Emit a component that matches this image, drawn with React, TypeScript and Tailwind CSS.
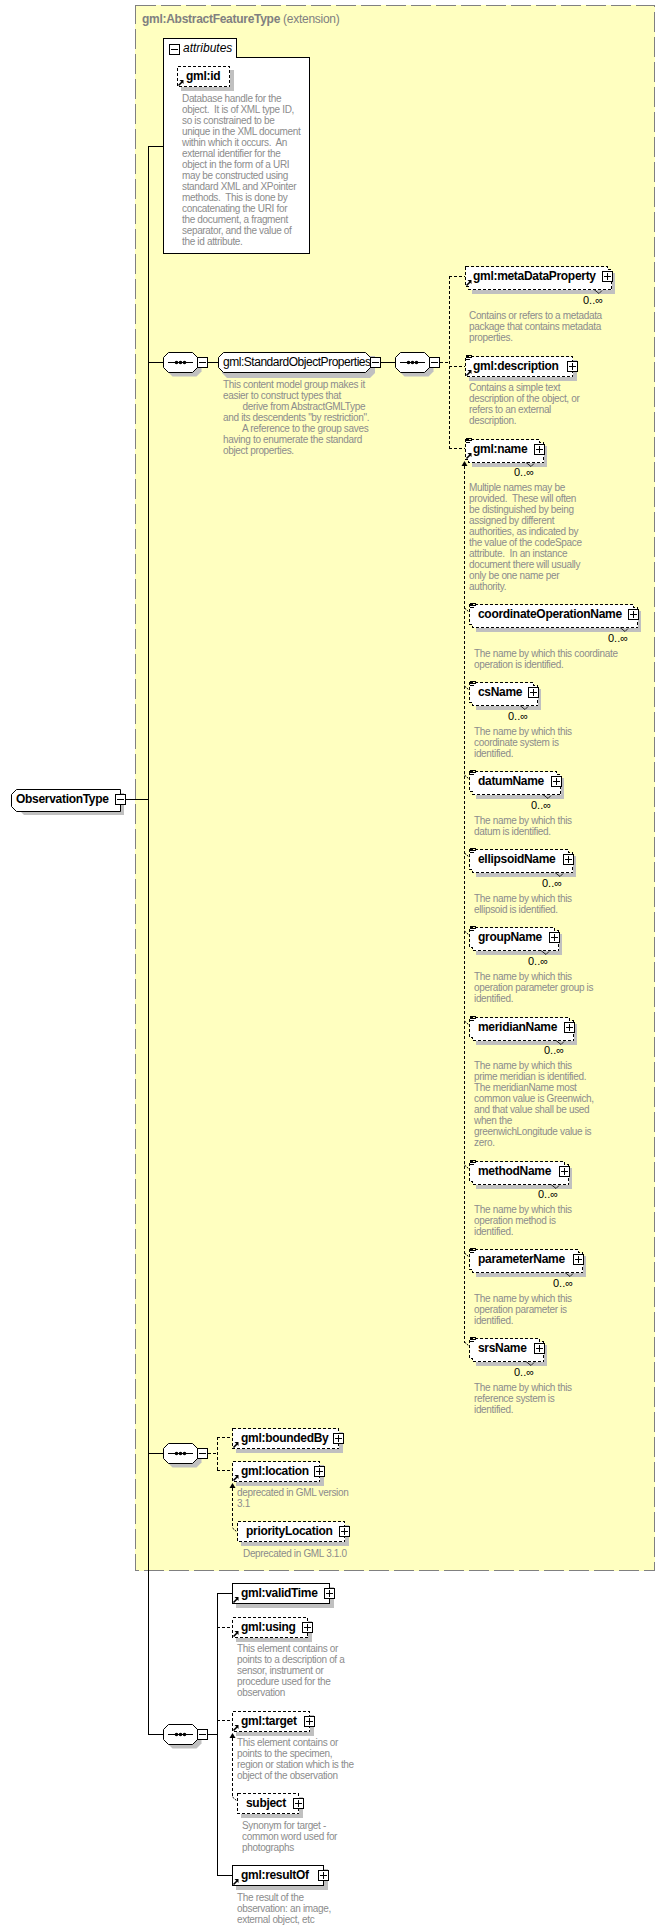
const sans = "font-['Liberation_Sans',Arial,sans-serif]";

type Box = { x: number; y: number; plus: number; multi?: boolean; solid?: boolean; refArrow?: boolean; list?: boolean; noExpander?: boolean };

// element boxes, plus = left edge of the expander square
const boxes: Box[] = [
  { x: 177, y: 66, plus: 224, refArrow: true, noExpander: true },
  { x: 465, y: 266, plus: 602, multi: true, refArrow: true },
  { x: 465, y: 356, plus: 567, refArrow: true, list: true },
  { x: 465, y: 439, plus: 534, multi: true, refArrow: true, list: true },
  { x: 469, y: 604, plus: 628, multi: true, list: true },
  { x: 469, y: 682, plus: 528, multi: true, list: true },
  { x: 469, y: 771, plus: 551, multi: true, list: true },
  { x: 469, y: 849, plus: 563, multi: true, list: true },
  { x: 469, y: 927, plus: 549, multi: true, list: true },
  { x: 469, y: 1017, plus: 564, multi: true, list: true },
  { x: 469, y: 1161, plus: 559, multi: true, list: true },
  { x: 469, y: 1249, plus: 573, multi: true, list: true },
  { x: 469, y: 1338, plus: 534, multi: true, list: true },
  { x: 232, y: 1428, plus: 333, refArrow: true },
  { x: 232, y: 1461, plus: 314, refArrow: true },
  { x: 237, y: 1521, plus: 339 },
  { x: 232, y: 1583, plus: 324, solid: true, refArrow: true },
  { x: 232, y: 1617, plus: 302, refArrow: true },
  { x: 232, y: 1711, plus: 304, refArrow: true },
  { x: 237, y: 1793, plus: 293 },
  { x: 232, y: 1865, plus: 318, solid: true, refArrow: true },
];

const substitutes = [604, 682, 771, 849, 927, 1017, 1161, 1249, 1338];

const labels = [
  { text: 'gml:id', cls: 'left-[186px] top-[66px]' },
  { text: 'gml:metaDataProperty', cls: 'left-[473px] top-[266px]' },
  { text: 'gml:description', cls: 'left-[473px] top-[356px]' },
  { text: 'gml:name', cls: 'left-[473px] top-[439px]' },
  { text: 'coordinateOperationName', cls: 'left-[478px] top-[604px]' },
  { text: 'csName', cls: 'left-[478px] top-[682px]' },
  { text: 'datumName', cls: 'left-[478px] top-[771px]' },
  { text: 'ellipsoidName', cls: 'left-[478px] top-[849px]' },
  { text: 'groupName', cls: 'left-[478px] top-[927px]' },
  { text: 'meridianName', cls: 'left-[478px] top-[1017px]' },
  { text: 'methodName', cls: 'left-[478px] top-[1161px]' },
  { text: 'parameterName', cls: 'left-[478px] top-[1249px]' },
  { text: 'srsName', cls: 'left-[478px] top-[1338px]' },
  { text: 'gml:boundedBy', cls: 'left-[241px] top-[1428px]' },
  { text: 'gml:location', cls: 'left-[241px] top-[1461px]' },
  { text: 'priorityLocation', cls: 'left-[246px] top-[1521px]' },
  { text: 'gml:validTime', cls: 'left-[241px] top-[1583px]' },
  { text: 'gml:using', cls: 'left-[241px] top-[1617px]' },
  { text: 'gml:target', cls: 'left-[241px] top-[1711px]' },
  { text: 'subject', cls: 'left-[246px] top-[1793px]' },
  { text: 'gml:resultOf', cls: 'left-[241px] top-[1865px]' },
];

const occurs = [
  'left-[583px] top-[294px]',
  'left-[514px] top-[466px]',
  'left-[608px] top-[632px]',
  'left-[508px] top-[710px]',
  'left-[531px] top-[799px]',
  'left-[542px] top-[877px]',
  'left-[528px] top-[955px]',
  'left-[544px] top-[1044px]',
  'left-[538px] top-[1188px]',
  'left-[553px] top-[1277px]',
  'left-[514px] top-[1366px]',
];

const nameDesc = (what: string) => `The name by which this\n${what}\nidentified.`;

const notes = [
  {
    cls: 'left-[182px] top-[93px]',
    text: 'Database handle for the\nobject.  It is of XML type ID,\nso is constrained to be\nunique in the XML document\nwithin which it occurs.  An\nexternal identifier for the\nobject in the form of a URI\nmay be constructed using\nstandard XML and XPointer\nmethods.  This is done by\nconcatenating the URI for\nthe document, a fragment\nseparator, and the value of\nthe id attribute.',
  },
  {
    cls: 'left-[223px] top-[379px]',
    text: 'This content model group makes it\neasier to construct types that\n        derive from AbstractGMLType\nand its descendents "by restriction".\n        A reference to the group saves\nhaving to enumerate the standard\nobject properties.',
  },
  {
    cls: 'left-[469px] top-[310px]',
    text: 'Contains or refers to a metadata\npackage that contains metadata\nproperties.',
  },
  {
    cls: 'left-[469px] top-[382px]',
    text: 'Contains a simple text\ndescription of the object, or\nrefers to an external\ndescription.',
  },
  {
    cls: 'left-[469px] top-[482px]',
    text: 'Multiple names may be\nprovided.  These will often\nbe distinguished by being\nassigned by different\nauthorities, as indicated by\nthe value of the codeSpace\nattribute.  In an instance\ndocument there will usually\nonly be one name per\nauthority.',
  },
  { cls: 'left-[474px] top-[648px]', text: 'The name by which this coordinate\noperation is identified.' },
  { cls: 'left-[474px] top-[726px]', text: nameDesc('coordinate system is') },
  { cls: 'left-[474px] top-[815px]', text: 'The name by which this\ndatum is identified.' },
  { cls: 'left-[474px] top-[893px]', text: 'The name by which this\nellipsoid is identified.' },
  { cls: 'left-[474px] top-[971px]', text: nameDesc('operation parameter group is') },
  {
    cls: 'left-[474px] top-[1060px]',
    text: 'The name by which this\nprime meridian is identified.\nThe meridianName most\ncommon value is Greenwich,\nand that value shall be used\nwhen the\ngreenwichLongitude value is\nzero.',
  },
  { cls: 'left-[474px] top-[1204px]', text: nameDesc('operation method is') },
  { cls: 'left-[474px] top-[1293px]', text: nameDesc('operation parameter is') },
  { cls: 'left-[474px] top-[1382px]', text: nameDesc('reference system is') },
  { cls: 'left-[237px] top-[1487px]', text: 'deprecated in GML version\n3.1' },
  { cls: 'left-[243px] top-[1548px]', text: 'Deprecated in GML 3.1.0' },
  {
    cls: 'left-[237px] top-[1643px]',
    text: 'This element contains or\npoints to a description of a\nsensor, instrument or\nprocedure used for the\nobservation',
  },
  {
    cls: 'left-[237px] top-[1737px]',
    text: 'This element contains or\npoints to the specimen,\nregion or station which is the\nobject of the observation',
  },
  { cls: 'left-[242px] top-[1820px]', text: 'Synonym for target -\ncommon word used for\nphotographs' },
  { cls: 'left-[237px] top-[1892px]', text: 'The result of the\nobservation: an image,\nexternal object, etc' },
];

function Expander({ x, y, plus }: { x: number; y: number; plus?: boolean }) {
  return (
    <g shapeRendering="crispEdges">
      <rect x={x + 0.5} y={y + 0.5} width={10} height={10} fill="#fff" stroke="#000" />
      <path d={`M${x + 2} ${y + 5.5}H${x + 9}`} stroke="#000" />
      {plus && <path d={`M${x + 5.5} ${y + 2}V${y + 9}`} stroke="#000" />}
    </g>
  );
}

function Sequence({ x, y }: { x: number; y: number }) {
  const shape = (dx: number, dy: number) =>
    `${x + dx + 0.5},${y + dy + 5.5} ${x + dx + 5.5},${y + dy + 0.5} ${x + dx + 29.5},${y + dy + 0.5} ${x + dx + 34.5},${y + dy + 5.5} ${x + dx + 34.5},${y + dy + 15.5} ${x + dx + 29.5},${y + dy + 20.5} ${x + dx + 5.5},${y + dy + 20.5} ${x + dx + 0.5},${y + dy + 15.5}`;
  return (
    <g>
      <polygon points={shape(4, 4)} fill="#c0c0c0" />
      <polygon points={shape(0, 0)} fill="#fff" stroke="#000" />
      <path d={`M${x + 5} ${y + 10.5}H${x + 30}`} stroke="#000" shapeRendering="crispEdges" />
      <circle cx={x + 13.5} cy={y + 10.5} r={1.8} />
      <circle cx={x + 17.5} cy={y + 10.5} r={1.8} />
      <circle cx={x + 21.5} cy={y + 10.5} r={1.8} />
      <Expander x={x + 34} y={y + 5} />
    </g>
  );
}

function ElementBox({ x, y, plus, multi, solid, refArrow, list, noExpander }: Box) {
  const right = plus + 5;
  const w = right - x;
  const dash = solid ? undefined : '3 2';
  return (
    <g>
      {multi ? (
        <>
          <rect x={x + 7} y={y + 7} width={w + 1} height={21} fill="#c0c0c0" shapeRendering="crispEdges" />
          {/* the stack of repeats only shows its outer outline */}
          <path
            d={`M${x + 0.5} ${y + 0.5}H${right + 0.5}V${y + 3.5}H${right + 4.5}V${y + 23.5}H${x + 3.5}V${y + 20.5}H${x + 0.5}Z`}
            fill="#fff"
            stroke="#000"
            strokeDasharray={dash}
            shapeRendering="crispEdges"
          />
          <path
            d={`M${plus - 8} ${y + 23.5}L${plus - 3} ${y + 27.5}L${plus} ${y + 24.5}`}
            fill="none"
            stroke="#000"
            strokeWidth={0.8}
          />
        </>
      ) : (
        <>
          <rect x={x + 4} y={y + 4} width={w + 1} height={21} fill="#c0c0c0" shapeRendering="crispEdges" />
          <rect
            x={x + 0.5}
            y={y + 0.5}
            width={w}
            height={20}
            fill="#fff"
            stroke="#000"
            strokeDasharray={dash}
            shapeRendering="crispEdges"
          />
        </>
      )}
      {refArrow && (
        <g>
          <path d={`M${x + 1.5} ${y + 19.5}L${x + 5} ${y + 16}`} stroke="#000" strokeWidth={1.6} />
          <path d={`M${x + 2.5} ${y + 14}H${x + 6.5}V${y + 18}Z`} fill="#000" />
        </g>
      )}
      {list && (
        <path
          d={`M${x + 1} ${y - 0.5}H${x + 7}M${x + 1} ${y + 1.5}H${x + 7}M${x + 1} ${y + 3.5}H${x + 5}`}
          stroke="#000"
          shapeRendering="crispEdges"
        />
      )}
      {!noExpander && <Expander x={plus} y={y + 5} plus />}
    </g>
  );
}

function ArrowUp({ x, y }: { x: number; y: number }) {
  return <path d={`M${x} ${y}L${x + 3} ${y + 5}H${x - 3}Z`} fill="#000" />;
}

export default function App() {
  return (
    <div className={`relative w-[665px] h-[1930px] overflow-hidden bg-white ${sans}`}>
      {/* extension panel */}
      <div className="absolute left-[135px] top-[5px] w-[520px] h-[1566px] bg-[#ffffc0]" />

      <svg className="absolute left-0 top-0" width={665} height={1930} viewBox="0 0 665 1930">
        <rect
          x={135.5}
          y={5.5}
          width={519}
          height={1565}
          fill="none"
          stroke="#808080"
          strokeDasharray="20 5"
          shapeRendering="crispEdges"
        />

        {/* solid connectors */}
        <path
          d="M148.5 146V1735M148 146.5H163M125 799.5H148M148 362.5H163M208 362.5H218M381 362.5H395M148 1453.5H163M148 1734.5H163M208 1734.5H218M217.5 1593V1876M217 1593.5H232M217 1875.5H232"
          stroke="#000"
          fill="none"
          shapeRendering="crispEdges"
        />
        {/* dashed connectors */}
        <path
          d="M440 362.5H449M449.5 276V449M449 276.5H465M449 366.5H465M449 448.5H465M208 1453.5H218M217.5 1437V1471M217 1437.5H232M217 1470.5H232M217 1627.5H232M217 1720.5H232M464.5 466V1343M232.5 1488V1528M232.5 1738V1797"
          stroke="#000"
          fill="none"
          strokeDasharray="3 2"
          shapeRendering="crispEdges"
        />
        {substitutes.map((top) => (
          <path key={top} d={`M464.5 ${top + 4}L469 ${top + 8}`} stroke="#000" strokeDasharray="2 1" />
        ))}
        <path d="M232.5 1528L237 1532M232.5 1797L237 1801" stroke="#000" strokeDasharray="2 1" />
        <ArrowUp x={464.5} y={461} />
        <ArrowUp x={232.5} y={1483} />
        <ArrowUp x={232.5} y={1733} />

        {/* attributes box */}
        <path d="M163.5 38.5H236.5V57.5H309.5V253.5H163.5Z" fill="#fff" stroke="#000" shapeRendering="crispEdges" />
        <Expander x={169} y={44} />

        {/* root type */}
        <polygon points="19,793 124,793 124,815 24,815 15,806 15,798" fill="#c0c0c0" />
        <polygon points="16.5,789.5 120.5,789.5 120.5,811.5 16.5,811.5 11.5,806.5 11.5,794.5" fill="#fff" stroke="#000" />
        <Expander x={115} y={794} />

        {/* group */}
        <polygon points="222,356 375,356 375,373 370,378 227,378 222,373" fill="#c0c0c0" />
        <polygon
          points="218.5,357.5 223.5,352.5 365.5,352.5 370.5,357.5 370.5,367.5 365.5,372.5 223.5,372.5 218.5,367.5"
          fill="#fff"
          stroke="#000"
        />
        <Expander x={370} y={357} />

        <Sequence x={163} y={352} />
        <Sequence x={395} y={352} />
        <Sequence x={163} y={1443} />
        <Sequence x={163} y={1724} />

        {boxes.map((b) => (
          <ElementBox key={`${b.x}-${b.y}`} {...b} />
        ))}
      </svg>

      <div className="absolute left-[142px] top-[12px] text-[12px] leading-[14px] tracking-[-0.28px] whitespace-pre text-[#808080]">
        <span className="font-bold">gml:AbstractFeatureType</span> (extension)
      </div>
      <div className="absolute left-[183px] top-[41px] text-[12px] leading-[14px] italic text-black">attributes</div>
      <div className="absolute left-[16px] top-[789px] text-[12px] leading-[20px] tracking-[-0.3px] font-bold text-black">ObservationType</div>
      <div className="absolute left-[223px] top-[352px] text-[12px] leading-[20px] tracking-[-0.47px] text-black">gml:StandardObjectProperties</div>

      {labels.map((l) => (
        <div key={l.text} className={`absolute ${l.cls} text-[12px] leading-[21px] tracking-[-0.3px] font-bold text-black whitespace-pre`}>
          {l.text}
        </div>
      ))}
      {occurs.map((cls) => (
        <div key={cls} className={`absolute ${cls} text-[11px] leading-[12px] text-black whitespace-pre`}>
          0..∞
        </div>
      ))}
      {notes.map((n) => (
        <div key={n.cls} className={`absolute ${n.cls} text-[10px] leading-[11px] tracking-[-0.33px] text-[#8c8c8c] whitespace-pre`}>
          {n.text}
        </div>
      ))}
    </div>
  );
}
